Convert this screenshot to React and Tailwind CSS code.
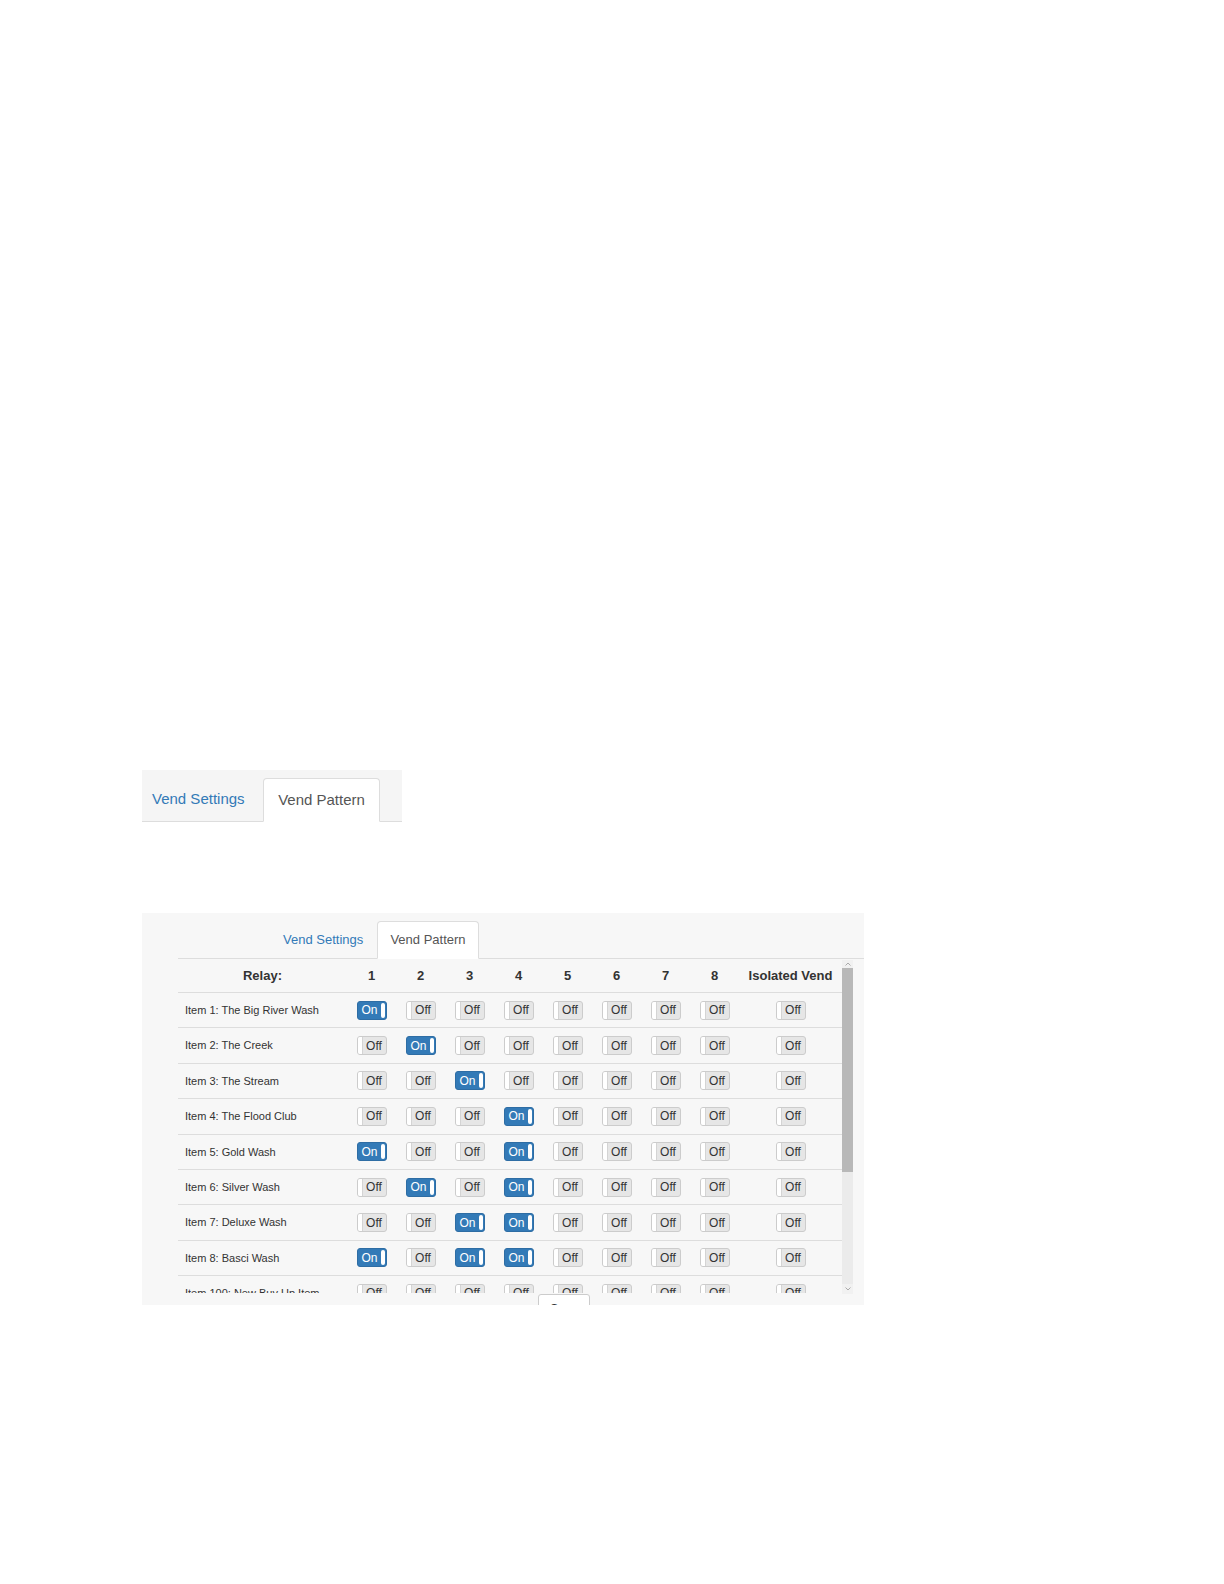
import React from "react";

const rows = [
  { label: "Item 1: The Big River Wash", on: [1] },
  { label: "Item 2: The Creek", on: [2] },
  { label: "Item 3: The Stream", on: [3] },
  { label: "Item 4: The Flood Club", on: [4] },
  { label: "Item 5: Gold Wash", on: [1, 4] },
  { label: "Item 6: Silver Wash", on: [2, 4] },
  { label: "Item 7: Deluxe Wash", on: [3, 4] },
  { label: "Item 8: Basci Wash", on: [1, 3, 4] },
  { label: "Item 100: New Buy Up Item", on: [] },
  { label: "Item 101: Extra", on: [] },
];

function Toggle({ on }) {
  if (on) {
    return (
      <div className="w-[30px] h-[19px] rounded-[3px] border border-[#2e6da4] bg-[#337ab7] flex overflow-hidden">
        <span className="flex-1 flex items-center justify-center text-white text-[12px] leading-none pl-[1px]">On</span>
        <span className="w-[4px] bg-white rounded-[2px] my-[1px] mr-[1px]"></span>
      </div>
    );
  }
  return (
    <div className="w-[30px] h-[19px] rounded-[3px] border border-[#cccccc] bg-[#e6e6e6] flex overflow-hidden">
      <span className="w-[5px] bg-white border-r border-[#d4d4d4]"></span>
      <span className="flex-1 flex items-center justify-center text-[#333] text-[12px] leading-none">Off</span>
    </div>
  );
}

export default function App() {
  const cols = [1, 2, 3, 4, 5, 6, 7, 8];
  return (
    <div
      className="w-[1224px] h-[1584px] bg-white pt-[770px] pl-[142px]"
      style={{ fontFamily: '"Liberation Sans", Arial, sans-serif' }}
    >
      {/* Top tabs snippet */}
      <div className="w-[260px] h-[52px] bg-[#f5f5f5] flex items-end border-b border-[#dddddd]">
        <div className="w-[121px] h-[43px] pl-[10px] flex items-center text-[15px] text-[#337ab7]">
          Vend Settings
        </div>
        <div className="w-[117px] h-[44px] -mb-[1px] bg-white border border-[#dddddd] border-b-transparent rounded-t-[4px] flex items-center justify-center text-[15px] text-[#555]">
          Vend Pattern
        </div>
      </div>

      {/* Main panel */}
      <div className="mt-[91px] w-[722px] h-[392px] bg-[#f7f7f7] overflow-hidden pt-[8px]">
        <div className="ml-[36px] w-[686px] h-[38px] flex items-end border-b border-[#dddddd]">
          <div className="w-[199px] h-[37px] pl-[105px] flex items-center text-[13px] text-[#337ab7]">
            Vend Settings
          </div>
          <div className="w-[102px] h-[38px] -mb-[1px] bg-white border border-[#dddddd] border-b-transparent rounded-t-[4px] flex items-center justify-center text-[13px] text-[#555]">
            Vend Pattern
          </div>
        </div>

        <div className="ml-[36px] flex">
          <div className="w-[664px] h-[334px] overflow-hidden">
            <div className="h-[34px] flex items-center border-b border-[#dddddd] text-[13px] font-bold text-[#333]">
              <div className="w-[169px] text-center">Relay:</div>
              {cols.map((c) => (
                <div key={c} className="w-[49px] text-center">{c}</div>
              ))}
              <div className="flex-1 text-center">Isolated Vend</div>
            </div>
            {rows.map((r, i) => (
              <div key={i} className="h-[35.4px] flex items-center border-b border-[#dddddd]">
                <div className="w-[169px] pl-[7px] text-[11px] text-[#333] whitespace-nowrap">{r.label}</div>
                {cols.map((c) => (
                  <div key={c} className="w-[49px] flex justify-center">
                    <Toggle on={r.on.includes(c)} />
                  </div>
                ))}
                <div className="flex-1 flex justify-center">
                  <Toggle on={false} />
                </div>
              </div>
            ))}
          </div>
          {/* custom scrollbar */}
          <div className="w-[11px] h-[334px] mt-[1px] bg-[#ebebeb] flex flex-col items-stretch">
            <div className="h-[8px] bg-[#f1f1f1] flex items-center justify-center">
              <svg width="6" height="4" viewBox="0 0 6 4"><path d="M0.5 3.5 L3 1 L5.5 3.5" stroke="#aaa" fill="none" strokeWidth="1" /></svg>
            </div>
            <div className="h-[204px] bg-[#b8b8b8]"></div>
            <div className="flex-1"></div>
            <div className="h-[10px] bg-[#f1f1f1] flex items-center justify-center">
              <svg width="6" height="4" viewBox="0 0 6 4"><path d="M0.5 0.5 L3 3 L5.5 0.5" stroke="#aaa" fill="none" strokeWidth="1" /></svg>
            </div>
          </div>
        </div>

        <div className="pl-[396px]">
          <div className="w-[52px] h-[26px] bg-white border border-[#cccccc] rounded-[3px] flex items-center justify-center text-[12px] text-[#333] pt-[4px]">
            Save
          </div>
        </div>
      </div>
    </div>
  );
}
